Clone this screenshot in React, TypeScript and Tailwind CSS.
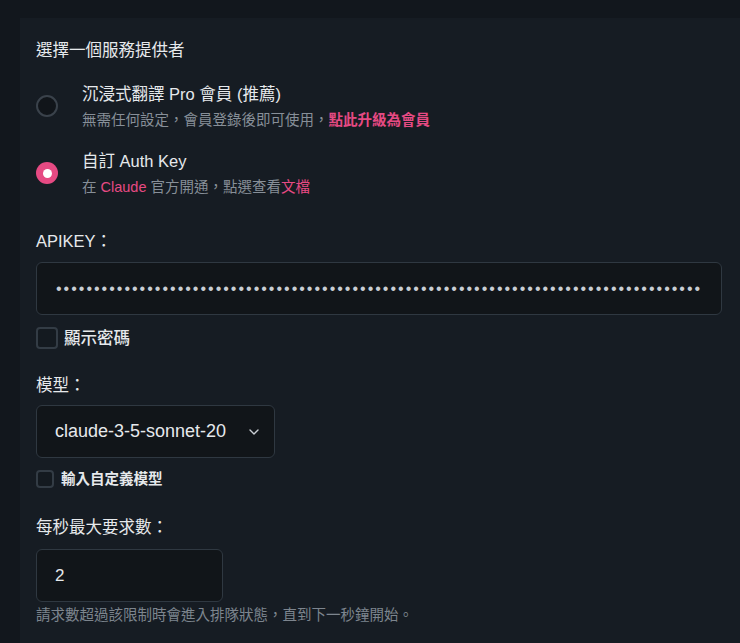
import React from "react";

const font = { fontFamily: '"Liberation Sans", "Noto Sans CJK TC", sans-serif' };

function Radio({ checked }: { checked?: boolean }) {
  return checked ? (
    <span className="flex h-[22px] w-[22px] shrink-0 items-center justify-center rounded-full bg-[#e64a83]">
      <span className="h-[9px] w-[9px] rounded-full bg-white" />
    </span>
  ) : (
    <span className="h-[22px] w-[22px] shrink-0 rounded-full border-2 border-[#3a424b] bg-[#11151a]" />
  );
}

export default function App() {
  return (
    <div className="min-h-[643px] bg-[#12171d] pl-5 pt-[18px]" style={font}>
      <div className="min-h-[625px] bg-[#161c23] pl-4 pr-[18px] pt-5 text-[#e6e9ec]">
        <div className="text-[16.5px] leading-6">選擇一個服務提供者</div>

        <div className="mt-5 flex flex-col gap-[19px]">
          <label className="flex items-center gap-6">
            <Radio />
            <div>
              <div className="text-[16.5px] leading-6">沉浸式翻譯 Pro 會員 (推薦)</div>
              <div className="mt-1 text-[14.5px] leading-5 text-[#878f98]">
                無需任何設定，會員登錄後即可使用，
                <span className="font-bold text-[#e64a83]">點此升級為會員</span>
              </div>
            </div>
          </label>
          <label className="flex items-center gap-6">
            <Radio checked />
            <div>
              <div className="text-[16.5px] leading-6">自訂 Auth Key</div>
              <div className="mt-1 text-[14.5px] leading-5 text-[#878f98]">
                在 <span className="text-[#e64a83]">Claude</span> 官方開通，點選查看
                <span className="text-[#e64a83]">文檔</span>
              </div>
            </div>
          </label>
        </div>

        <div className="mt-8 text-[16.5px] leading-6">APIKEY：</div>
        <input
          type="password"
          readOnly
          value={"x".repeat(86)}
          className="mt-[9px] block h-[53px] w-full rounded-md border border-[#2f3841] bg-[#111519] px-[19px] text-base tracking-[2px] text-[#c9ced4] outline-none"
        />
        <label className="mt-[11px] flex items-center gap-[6px]">
          <span className="h-[22px] w-[22px] rounded border-2 border-[#333c45] bg-[#141a20]" />
          <span className="text-[16.5px] font-medium leading-6">顯示密碼</span>
        </label>

        <div className="mt-[23px] text-[16.5px] leading-6">模型：</div>
        <div className="mt-2 flex h-[53px] w-[239px] items-center justify-between rounded-md border border-[#2f3841] bg-[#111519] pl-[18px] pr-[14px]">
          <span className="w-[171px] overflow-hidden whitespace-nowrap text-[18px]">claude-3-5-sonnet-20240620</span>
          <svg width="12" height="8" viewBox="0 0 12 8" fill="none">
            <path d="M2 2l4 4 4-4" stroke="#c9ced4" strokeWidth="1.4" strokeLinecap="round" strokeLinejoin="round" />
          </svg>
        </div>
        <label className="mt-[11px] flex items-center gap-[7px]">
          <span className="h-[18px] w-[18px] rounded border-2 border-[#333c45] bg-[#141a20]" />
          <span className="text-[14.5px] font-semibold leading-5">輸入自定義模型</span>
        </label>

        <div className="mt-[26px] text-[16.5px] leading-6">每秒最大要求數：</div>
        <input
          type="text"
          readOnly
          value="2"
          className="mt-[10px] block h-[53px] w-[187px] rounded-md border border-[#2f3841] bg-[#111519] px-[18px] text-[17px] text-[#e6e9ec] outline-none"
        />
        <div className="mt-1 text-[14.5px] leading-[18px] text-[#7d858e]">請求數超過該限制時會進入排隊狀態，直到下一秒鐘開始。</div>
      </div>
    </div>
  );
}
